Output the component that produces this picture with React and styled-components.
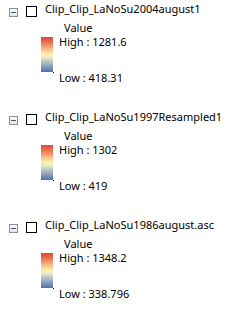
import React from 'react';
import styled, { createGlobalStyle } from 'styled-components';

const Global = createGlobalStyle`
  body {
    margin: 0;
    background: #fff;
    font-family: "Noto Sans", "Liberation Sans", sans-serif;
    font-size: 11px;
    color: #000;
  }
`;

const Toc = styled.div`
  display: flex;
  flex-direction: column;
  padding-top: 1px;
`;

const Layer = styled.div`
  height: 108px;
  display: flex;
  flex-direction: column;
`;

const Header = styled.div`
  display: flex;
  align-items: flex-start;
  height: 16px;
  line-height: 16px;
`;

const Expander = styled.span`
  box-sizing: border-box;
  width: 9px;
  height: 9px;
  margin: 7px 0 0 9px;
  border: 1px solid #8f8f8f;
  background: linear-gradient(#fbfbfb, #e4e4e4);
  display: flex;
  align-items: center;
  justify-content: center;

  &::after {
    content: '';
    width: 5px;
    height: 1px;
    background: #3a5a8c;
  }
`;

const Check = styled.span`
  box-sizing: border-box;
  width: 11px;
  height: 11px;
  margin: 5px 0 0 8px;
  border: 1px solid #000;
  background: #fff;
`;

const Name = styled.span`
  margin-left: 8px;
  white-space: nowrap;
`;

const FieldName = styled.div`
  margin: 4px 0 0 64px;
  line-height: 13px;
`;

const Legend = styled.div`
  display: flex;
  align-items: flex-start;
  margin: 1px 0 0 41px;
`;

const Ramp = styled.div`
  position: relative;
  width: 12px;
  height: 35px;
  margin-top: 2px;
  background: linear-gradient(
    #dc4437 0%,
    #ef7a55 18%,
    #f9b985 34%,
    #fdf1b6 50%,
    #e9edc5 58%,
    #b9c8c6 70%,
    #8ea6bf 82%,
    #4f70ad 100%
  );

  &::after {
    content: '';
    position: absolute;
    right: -1px;
    bottom: -1px;
    width: 1px;
    height: 1px;
    background: #000;
  }
`;

const Labels = styled.div`
  display: flex;
  flex-direction: column;
  gap: 22px;
  margin-left: 6px;
  line-height: 14px;
  white-space: nowrap;
`;

const layers = [
  { name: 'Clip_Clip_LaNoSu2004august1', high: '1281.6', low: '418.31' },
  { name: 'Clip_Clip_LaNoSu1997Resampled1', high: '1302', low: '419' },
  { name: 'Clip_Clip_LaNoSu1986august.asc', high: '1348.2', low: '338.796' },
];

export default function App() {
  return (
    <>
      <Global />
      <Toc>
        {layers.map(l => (
          <Layer key={l.name}>
            <Header>
              <Expander />
              <Check />
              <Name>{l.name}</Name>
            </Header>
            <FieldName>Value</FieldName>
            <Legend>
              <Ramp />
              <Labels>
                <span>High : {l.high}</span>
                <span>Low : {l.low}</span>
              </Labels>
            </Legend>
          </Layer>
        ))}
      </Toc>
    </>
  );
}
